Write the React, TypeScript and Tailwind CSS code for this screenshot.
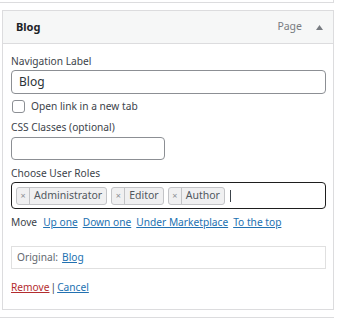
import React from "react";

const font = { fontFamily: '"Noto Sans", "Open Sans", sans-serif' };

function Tag({ label }: { label: string }) {
  return (
    <span className="flex h-[18px] items-stretch rounded-[3px] border border-[#c3c4c7] bg-[#f0f0f1] text-[#50575e]">
      <span className="flex w-[13px] items-center justify-center border-r border-[#c3c4c7] text-[9px] leading-none text-[#8c8f94]">×</span>
      <span className="flex items-center px-[4px] text-[10.5px] leading-none">{label}</span>
    </span>
  );
}

export default function App() {
  return (
    <div className="h-[318px] w-[340px] overflow-hidden bg-white text-[#3c434a]" style={font}>
      <div className="h-[3px] w-[334px] border-b border-r border-[#dcdcde]" />
      <div className="ml-[2px] mt-[7px] w-[332px] border border-[#dcdcde]">
        <div className="flex h-[33px] items-center justify-between border-b border-[#dcdcde] bg-[#f6f7f7] pl-[13px] pr-[10px]">
          <span className="text-[11px] font-bold text-[#1d2327]">Blog</span>
          <span className="flex items-center gap-[14px] text-[10.5px] text-[#787c82]">
            <span>Page</span>
            <svg width="7" height="5" viewBox="0 0 7 5"><path d="M3.5 0 L7 5 L0 5 Z" fill="#787c82" /></svg>
          </span>
        </div>
        <div className="px-[8px] pb-[14px] pt-[9px] text-[10.2px]">
          <div className="leading-[16px]">Navigation Label</div>
          <div className="mt-[1px] flex h-[24px] w-[315px] items-center rounded-[4px] border border-[#8c8f94] px-[7px] text-[12px] text-[#2c3338]">Blog</div>
          <label className="mt-[5px] flex items-center gap-[6px] leading-[14px]">
            <span className="ml-[1px] h-[13px] w-[13px] rounded-[3px] border border-[#8c8f94]" />
            <span>Open link in a new tab</span>
          </label>
          <div className="mt-[6px] leading-[16px]">CSS Classes (optional)</div>
          <div className="mt-[2px] h-[23px] w-[154px] rounded-[4px] border border-[#8c8f94]" />
          <div className="mt-[5px] leading-[16px]">Choose User Roles</div>
          <div className="mt-[1px] flex h-[27px] w-[315px] items-center gap-[4px] rounded-[4px] border border-[#1e1e1e] px-[4px]">
            <Tag label="Administrator" />
            <Tag label="Editor" />
            <Tag label="Author" />
            <span className="ml-[1px] h-[12px] w-px bg-[#3c434a]" />
          </div>
          <div className="mt-[5px] flex items-center gap-[5px] leading-[16px]">
            <span className="mr-[1px]">Move</span>
            <a className="text-[#2271b1] underline">Up one</a>
            <a className="text-[#2271b1] underline">Down one</a>
            <a className="text-[#2271b1] underline">Under Marketplace</a>
            <a className="text-[#2271b1] underline">To the top</a>
          </div>
          <div className="mt-[16px] flex h-[23px] w-[315px] items-center border border-[#e0e0e0] px-[5px] text-[#646970]">
            <span>Original:</span>
            <a className="ml-[4px] text-[#2271b1] underline">Blog</a>
          </div>
          <div className="mt-[10px] leading-[16px]">
            <a className="text-[#b32d2e] underline">Remove</a>
            <span className="mx-[1px]">|</span>
            <a className="text-[#2271b1] underline">Cancel</a>
          </div>
        </div>
      </div>
      <div className="mt-[7px] h-[10px] w-[334px] border-r border-t border-[#dcdcde]" />
    </div>
  );
}
